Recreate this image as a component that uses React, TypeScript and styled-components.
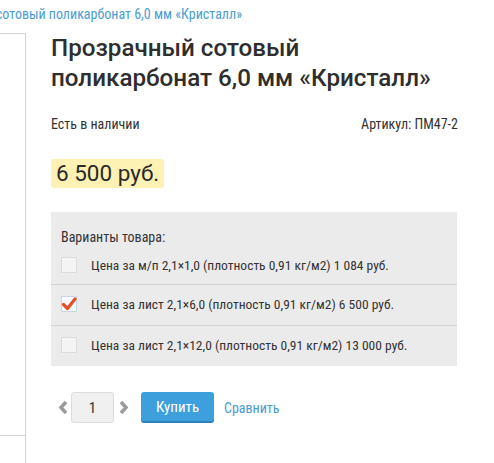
import styled, { createGlobalStyle } from "styled-components";

const variants = [
  { id: 1, label: "Цена за м/п 2,1×1,0 (плотность 0,91 кг/м2) 1 084 руб.", checked: false },
  { id: 2, label: "Цена за лист 2,1×6,0 (плотность 0,91 кг/м2) 6 500 руб.", checked: true },
  { id: 3, label: "Цена за лист 2,1×12,0 (плотность 0,91 кг/м2) 13 000 руб.", checked: false },
];

const narrow = `"Roboto Condensed", "Liberation Sans Narrow", "DejaVu Sans Condensed", sans-serif`;

export default function App() {
  return (
    <>
      <GlobalStyle />
      <Breadcrumb>
        <CrumbLink href="#">Прозрачный сотовый поликарбонат 6,0 мм «Кристалл»</CrumbLink>
      </Breadcrumb>
      <Main>
        <LeftCol>
          <ImageFrame />
        </LeftCol>
        <Content>
          <Title>Прозрачный сотовый поликарбонат 6,0 мм «Кристалл»</Title>
          <Meta>
            <span>Есть в наличии</span>
            <span>Артикул: ПМ47-2</span>
          </Meta>
          <Price>6 500 руб.</Price>
          <Variants>
            <VariantsHeader>Варианты товара:</VariantsHeader>
            {variants.map((v, i) => (
              <VariantRow key={v.id} $first={i === 0}>
                <Checkbox $checked={v.checked}>
                  {v.checked && (
                    <svg width="16" height="16" viewBox="0 0 16 16">
                      <path
                        d="M2.5 8.5 L6.5 12.5 L14 3"
                        fill="none"
                        stroke="#e4502a"
                        strokeWidth="3.2"
                        strokeLinecap="round"
                        strokeLinejoin="round"
                      />
                    </svg>
                  )}
                </Checkbox>
                <span>{v.label}</span>
              </VariantRow>
            ))}
          </Variants>
          <Actions>
            <Arrow>
              <svg width="10" height="15" viewBox="0 0 10 15">
                <polyline points="8,2 3,7.5 8,13" fill="none" stroke="#9a9a9a" strokeWidth="3.5" />
              </svg>
            </Arrow>
            <Qty value="1" readOnly />
            <Arrow>
              <svg width="10" height="15" viewBox="0 0 10 15">
                <polyline points="2,2 7,7.5 2,13" fill="none" stroke="#9a9a9a" strokeWidth="3.5" />
              </svg>
            </Arrow>
            <BuyButton>Купить</BuyButton>
            <CompareLink href="#">Сравнить</CompareLink>
          </Actions>
        </Content>
      </Main>
    </>
  );
}

const GlobalStyle = createGlobalStyle`
  body {
    margin: 0;
    background: #fff;
    overflow: hidden;
    color: #333;
    font-family: ${narrow};
    font-stretch: condensed;
    font-size: 14px;
  }
`;

const Breadcrumb = styled.div`
  width: 242px;
  height: 33px;
  display: flex;
  justify-content: flex-end;
  overflow: hidden;
  white-space: nowrap;
  padding-top: 5px;
  box-sizing: border-box;
  line-height: 18px;
`;

const CrumbLink = styled.a`
  flex-shrink: 0;
  color: #4a9dd3;
  text-decoration: none;
  font-size: 14px;
`;

const Main = styled.div`
  display: flex;
  height: 430px;
`;

const LeftCol = styled.div`
  width: 25px;
  flex-shrink: 0;
  border-right: 1px solid #d3d3d3;
`;

const ImageFrame = styled.div`
  height: 401px;
  border-top: 1px solid #d3d3d3;
  border-bottom: 1px solid #d3d3d3;
`;

const Content = styled.div`
  width: 407px;
  padding-left: 25px;
`;

const Title = styled.h1`
  margin: 0;
  font-family: Roboto, sans-serif;
  font-stretch: normal;
  font-weight: 500;
  font-size: 24.2px;
  line-height: 30px;
  color: #2e2e2e;
`;

const Meta = styled.div`
  display: flex;
  justify-content: space-between;
  margin-top: 22px;
  line-height: 18px;
  color: #333;
`;

const Price = styled.div`
  display: inline-block;
  margin-top: 26px;
  padding: 0 5px;
  height: 29px;
  line-height: 29px;
  background: #fdf1b3;
  border-radius: 3px;
  font-family: Roboto, sans-serif;
  font-stretch: normal;
  font-size: 22.5px;
  color: #2a2a2a;
`;

const Variants = styled.div`
  margin-top: 24px;
  width: 406px;
  background: #ebebeb;
  padding-top: 15px;
`;

const VariantsHeader = styled.div`
  padding-left: 10px;
  line-height: 20px;
`;

const VariantRow = styled.label<{ $first: boolean }>`
  display: flex;
  align-items: center;
  gap: 14px;
  padding: 0 0 2px 10px;
  height: ${(p) => (p.$first ? "35px" : "38px")};
  border-top: ${(p) => (p.$first ? "none" : "1px solid #d2d2d2")};
  white-space: nowrap;
  font-size: 13.5px;
`;

const Checkbox = styled.span<{ $checked: boolean }>`
  width: 16px;
  height: 16px;
  box-sizing: border-box;
  flex-shrink: 0;
  background: ${(p) => (p.$checked ? "#fafcff" : "#f4f4f4")};
  border: 1px solid ${(p) => (p.$checked ? "#c9d6e4" : "#dcdcdc")};
  display: flex;
  align-items: center;
  justify-content: center;

  svg {
    margin: -1px;
  }
`;

const Actions = styled.div`
  display: flex;
  align-items: center;
  margin-top: 26px;
  padding-left: 7px;
`;

const Arrow = styled.span`
  display: flex;
  width: 10px;
  height: 15px;
  margin: 0 3px 0 0;

  & + input + & {
    margin: 0 12px 0 5px;
  }
`;

const Qty = styled.input`
  width: 43px;
  height: 31px;
  box-sizing: border-box;
  border: 1px solid #dcdcdc;
  border-radius: 3px;
  background: #f0f0f0;
  text-align: center;
  font-family: ${narrow};
  font-stretch: condensed;
  font-size: 15px;
  color: #333;
  padding: 0;
  outline: none;
`;

const BuyButton = styled.button`
  width: 73px;
  height: 31px;
  box-sizing: border-box;
  border: none;
  border-bottom: 2px solid #2d7fb7;
  border-radius: 3px;
  background: #3d9fdc;
  color: #fff;
  font-family: ${narrow};
  font-stretch: condensed;
  font-size: 15px;
  cursor: pointer;
`;

const CompareLink = styled.a`
  margin-left: 10px;
  color: #4a9ad0;
  text-decoration: none;
  font-size: 14px;
`;
